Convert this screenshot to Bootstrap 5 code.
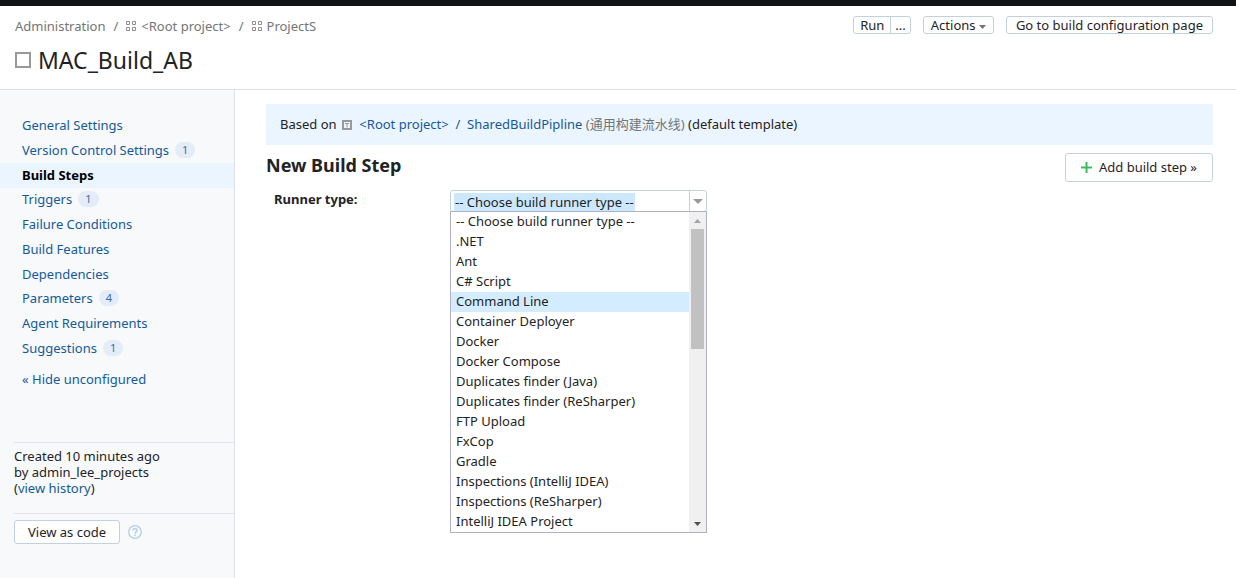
<!DOCTYPE html>
<html lang="en">
<head>
<meta charset="utf-8">
<meta name="viewport" content="width=device-width, initial-scale=1">
<title>MAC_Build_AB - Build Steps</title>
<link href="https://cdn.jsdelivr.net/npm/bootstrap@5.3.0/dist/css/bootstrap.min.css" rel="stylesheet">
<style>
  body { font: 13px/16px "Noto Sans", "Noto Sans CJK SC", sans-serif; color: #1f2326; background: #fff; }
  a { color: #15599a; text-decoration: none; }
  a:hover { text-decoration: underline; }
  .topline { height: 6px; background: #111214; }
  .page-head { border-bottom: 1px solid #dfe1e8; padding: 10px 23px 14px 15px; }
  .crumbs { line-height: 20px; }
  .crumbs a, .crumbs .sep { color: #737577; }
  .crumbs .sep { padding: 0 8px; }
  .crumbs svg { margin-right: 4px; }
  .page-title { font-size: 23px; line-height: 30px; font-weight: 400; gap: 7px; padding-top: 9px; }
  .tc-btn { font-size: 13px; line-height: 16px; padding: 0 7px; color: #1f2326; background: #fff; border: 1px solid #c3d1dd; border-radius: 3px; }
  .tc-btn:hover { border-color: #8fa6b8; background: #fff; }
  .tc-btn.run-btn { padding: 0 6px; }
  .caret-down { width: 7px; height: 4px; }
  .tc-btn.wide-btn { padding: 0 9px; }
  .side { flex: 0 0 235px; background: #f7f9fb; border-right: 1px solid #dfe1e8; padding-top: 24px; min-height: calc(100vh - 90px); }
  .side-nav { min-height: 247px; }
  .side-nav a { padding: 0 22px 2px; }
  .side-nav .active { background: #ebf5ff; color: #000; font-weight: 700; }
  .count { font-size: 11px; line-height: 16px; padding: 0 7px; border-radius: 8px; background: #e4edf7; color: #3d6aa8; font-weight: 400; margin-left: 6px; }
  .hide-row { padding: 10px 22px 55px; }
  .side-box { border-top: 1px solid #dfe4ea; margin-left: 14px; padding: 6px 0; }
  .history { padding: 5px 0 17px; }
  .tc-btn.code-btn { padding: 3px 13px; line-height: 16px; }
  .main { padding: 14px 23px 24px 31px; }
  .based { background: #ebf5ff; padding: 12px 14px 13px; }
  .based .icon-tpl { margin: 0 4px 0 2px; vertical-align: -1px; }
  .muted { color: #737577; }
  .step-title { font-size: 18px; line-height: 24px; font-weight: 700; }
  .tc-btn.add-btn { padding: 5px 14px 5px 13px; line-height: 17px; }
  .add-btn svg { margin-right: 4px; }
  .tc-btn.add-btn { padding: 5px 15px; }
  .add-btn svg { vertical-align: -1px; }
  .runner-label { width: 176px; font-weight: 700; padding-top: 1px; }
  .combo { width: 257px; }
  .combo-field { height: 22px; border: 1px solid #c3d1dd; border-radius: 3px; }
  .combo-field input { border: 0; outline: 0; padding: 2px 0 0 1px; margin-left: 3px; width: 235px; color: #1f2326; background: linear-gradient(#cbe8ff, #cbe8ff) 0 2px / 181px 18px no-repeat; }
  .combo-field button { width: 17px; border: 0; border-left: 1px solid #c3d1dd; background: transparent; padding: 0; }
  .options { top: 21px; border: 1px solid #b0b0cb; background: #fff; z-index: 5; }
  .options ul { line-height: 18px; }
  .options li { padding: 0 0 2px 5px; }
  .options li[aria-selected="true"] { background: #d4ecff; }
  .track { width: 17px; background: #f0f0f0; }
  .thumb { width: 13px; height: 120px; background: #c1c1c1; }
  .end { height: 17px; }
</style>
</head>
<body>
<div class="topline"></div>
<header class="page-head">
  <div class="d-flex justify-content-between align-items-start">
    <nav class="crumbs d-flex align-items-center" aria-label="breadcrumb">
      <a href="#">Administration</a><span class="sep">/</span>
      <svg width="11" height="11" viewBox="0 0 11 11" fill="none" stroke="#8b8d8f" aria-hidden="true"><path d="M.5 .5h3v3h-3zM6.500 .5h3v3h-3zM.5 6.500h3v3h-3zM6.500 6.500h3v3h-3z"/></svg>
      <a href="#">&lt;Root project&gt;</a><span class="sep">/</span>
      <svg width="11" height="11" viewBox="0 0 11 11" fill="none" stroke="#8b8d8f" aria-hidden="true"><path d="M.5 .5h3v3h-3zM6.500 .5h3v3h-3zM.5 6.500h3v3h-3zM6.500 6.500h3v3h-3z"/></svg>
      <a href="#">ProjectS</a>
    </nav>
    <div class="d-flex">
      <div class="btn-group me-2" role="group" aria-label="Run build">
        <button type="button" class="btn tc-btn run-btn">Run</button>
        <button type="button" class="btn tc-btn px-1" aria-label="Run custom build">...</button>
      </div>
      <button type="button" class="btn tc-btn mx-1">Actions <svg class="caret-down" viewBox="0 0 7 4" aria-hidden="true"><path d="M0 0h7L3.500 4z" fill="#737577"/></svg></button>
      <button type="button" class="btn tc-btn wide-btn ms-2">Go to build configuration page</button>
    </div>
  </div>
  <h1 class="page-title d-flex align-items-center mb-0">
    <svg width="16" height="16" viewBox="0 0 16 16" fill="none" aria-hidden="true"><path d="M1 1h14v14H1z" stroke="#999" stroke-width="2"/></svg>
    MAC_Build_AB
  </h1>
</header>

<div class="d-flex">
  <aside class="side">
    <nav class="side-nav d-flex flex-column" aria-label="Build configuration settings">
      <a class="flex-fill d-flex align-items-center" href="#">General Settings</a>
      <a class="flex-fill d-flex align-items-center" href="#">Version Control Settings <span class="count">1</span></a>
      <a class="flex-fill d-flex align-items-center active" aria-current="page" href="#">Build Steps</a>
      <a class="flex-fill d-flex align-items-center" href="#">Triggers <span class="count">1</span></a>
      <a class="flex-fill d-flex align-items-center" href="#">Failure Conditions</a>
      <a class="flex-fill d-flex align-items-center" href="#">Build Features</a>
      <a class="flex-fill d-flex align-items-center" href="#">Dependencies</a>
      <a class="flex-fill d-flex align-items-center" href="#">Parameters <span class="count">4</span></a>
      <a class="flex-fill d-flex align-items-center" href="#">Agent Requirements</a>
      <a class="flex-fill d-flex align-items-center" href="#">Suggestions <span class="count">1</span></a>
    </nav>
    <div class="hide-row"><a href="#">« Hide unconfigured</a></div>
    <div class="side-box history">
      <div>Created 10 minutes ago</div>
      <div>by admin_lee_projects</div>
      <div>(<a href="#">view history</a>)</div>
    </div>
    <div class="side-box d-flex align-items-center gap-2">
      <button type="button" class="btn tc-btn code-btn">View as code</button>
      <a href="#" class="d-flex" aria-label="Help"><svg width="14" height="14" viewBox="0 0 14 14" fill="none" stroke="#b5cde2" aria-hidden="true"><circle cx="7" cy="7" r="6.300" stroke-width="1.300"/><path d="M5 5.600C5 3 9 3.200 9 5.400 9 6.800 7 6.800 7 8.500M7 9.600v1.300" stroke-width="1.500"/></svg></a>
    </div>
  </aside>

  <main class="main flex-fill">
    <div class="based">
      Based on
      <svg class="icon-tpl" width="10" height="10" viewBox="0 0 10 10" fill="none" stroke="#999" aria-hidden="true"><path d="M1 1h8v8H1z" stroke-width="2"/><path d="M3 3.500h4M5 3.500v4"/></svg>
      <a href="#">&lt;Root project&gt;&nbsp; / &nbsp;SharedBuildPipline</a> <span class="muted">(通用构建流水线)</span> (default template)
    </div>
    <div class="d-flex justify-content-between align-items-start pt-2">
      <h2 class="step-title mb-0">New Build Step</h2>
      <button type="button" class="btn tc-btn add-btn"><svg width="11" height="11" viewBox="0 0 11 11" aria-hidden="true"><path d="M5.500 0v11M0 5.500h11" stroke="#3dbb5c" stroke-width="2"/></svg> Add build step »</button>
    </div>
    <form class="d-flex align-items-start ps-2 pt-2">
      <label class="runner-label" for="runner">Runner type:</label>
      <div class="combo position-relative">
        <div class="combo-field d-flex">
          <input id="runner" type="text" role="combobox" aria-expanded="true" aria-controls="runner-options" value="-- Choose build runner type --">
          <button type="button" class="d-flex align-items-center justify-content-center" aria-label="Show runner types"><svg width="10" height="5" viewBox="0 0 10 5" aria-hidden="true"><path d="M0 0h10L5 5z" fill="#999"/></svg></button>
        </div>
        <div class="options position-absolute start-0 w-100 d-flex">
          <ul id="runner-options" class="list-unstyled flex-fill mb-0" role="listbox" aria-label="Runner type">
            <li role="option">-- Choose build runner type --</li>
            <li role="option">.NET</li>
            <li role="option">Ant</li>
            <li role="option">C# Script</li>
            <li role="option" aria-selected="true">Command Line</li>
            <li role="option">Container Deployer</li>
            <li role="option">Docker</li>
            <li role="option">Docker Compose</li>
            <li role="option">Duplicates finder (Java)</li>
            <li role="option">Duplicates finder (ReSharper)</li>
            <li role="option">FTP Upload</li>
            <li role="option">FxCop</li>
            <li role="option">Gradle</li>
            <li role="option">Inspections (IntelliJ IDEA)</li>
            <li role="option">Inspections (ReSharper)</li>
            <li role="option">IntelliJ IDEA Project</li>
          </ul>
          <div class="track d-flex flex-column align-items-center" aria-hidden="true">
            <div class="end d-flex align-items-center"><svg width="7" height="4" viewBox="0 0 7 4"><path d="M0 4h7L3.500 0z" fill="#a3a3a3"/></svg></div>
            <div class="thumb"></div>
            <div class="end d-flex align-items-center mt-auto"><svg width="7" height="4" viewBox="0 0 7 4"><path d="M0 0h7L3.500 4z" fill="#505050"/></svg></div>
          </div>
        </div>
      </div>
    </form>
  </main>
</div>
<script src="https://cdn.jsdelivr.net/npm/bootstrap@5.3.0/dist/js/bootstrap.bundle.min.js"></script>
</body>
</html>
